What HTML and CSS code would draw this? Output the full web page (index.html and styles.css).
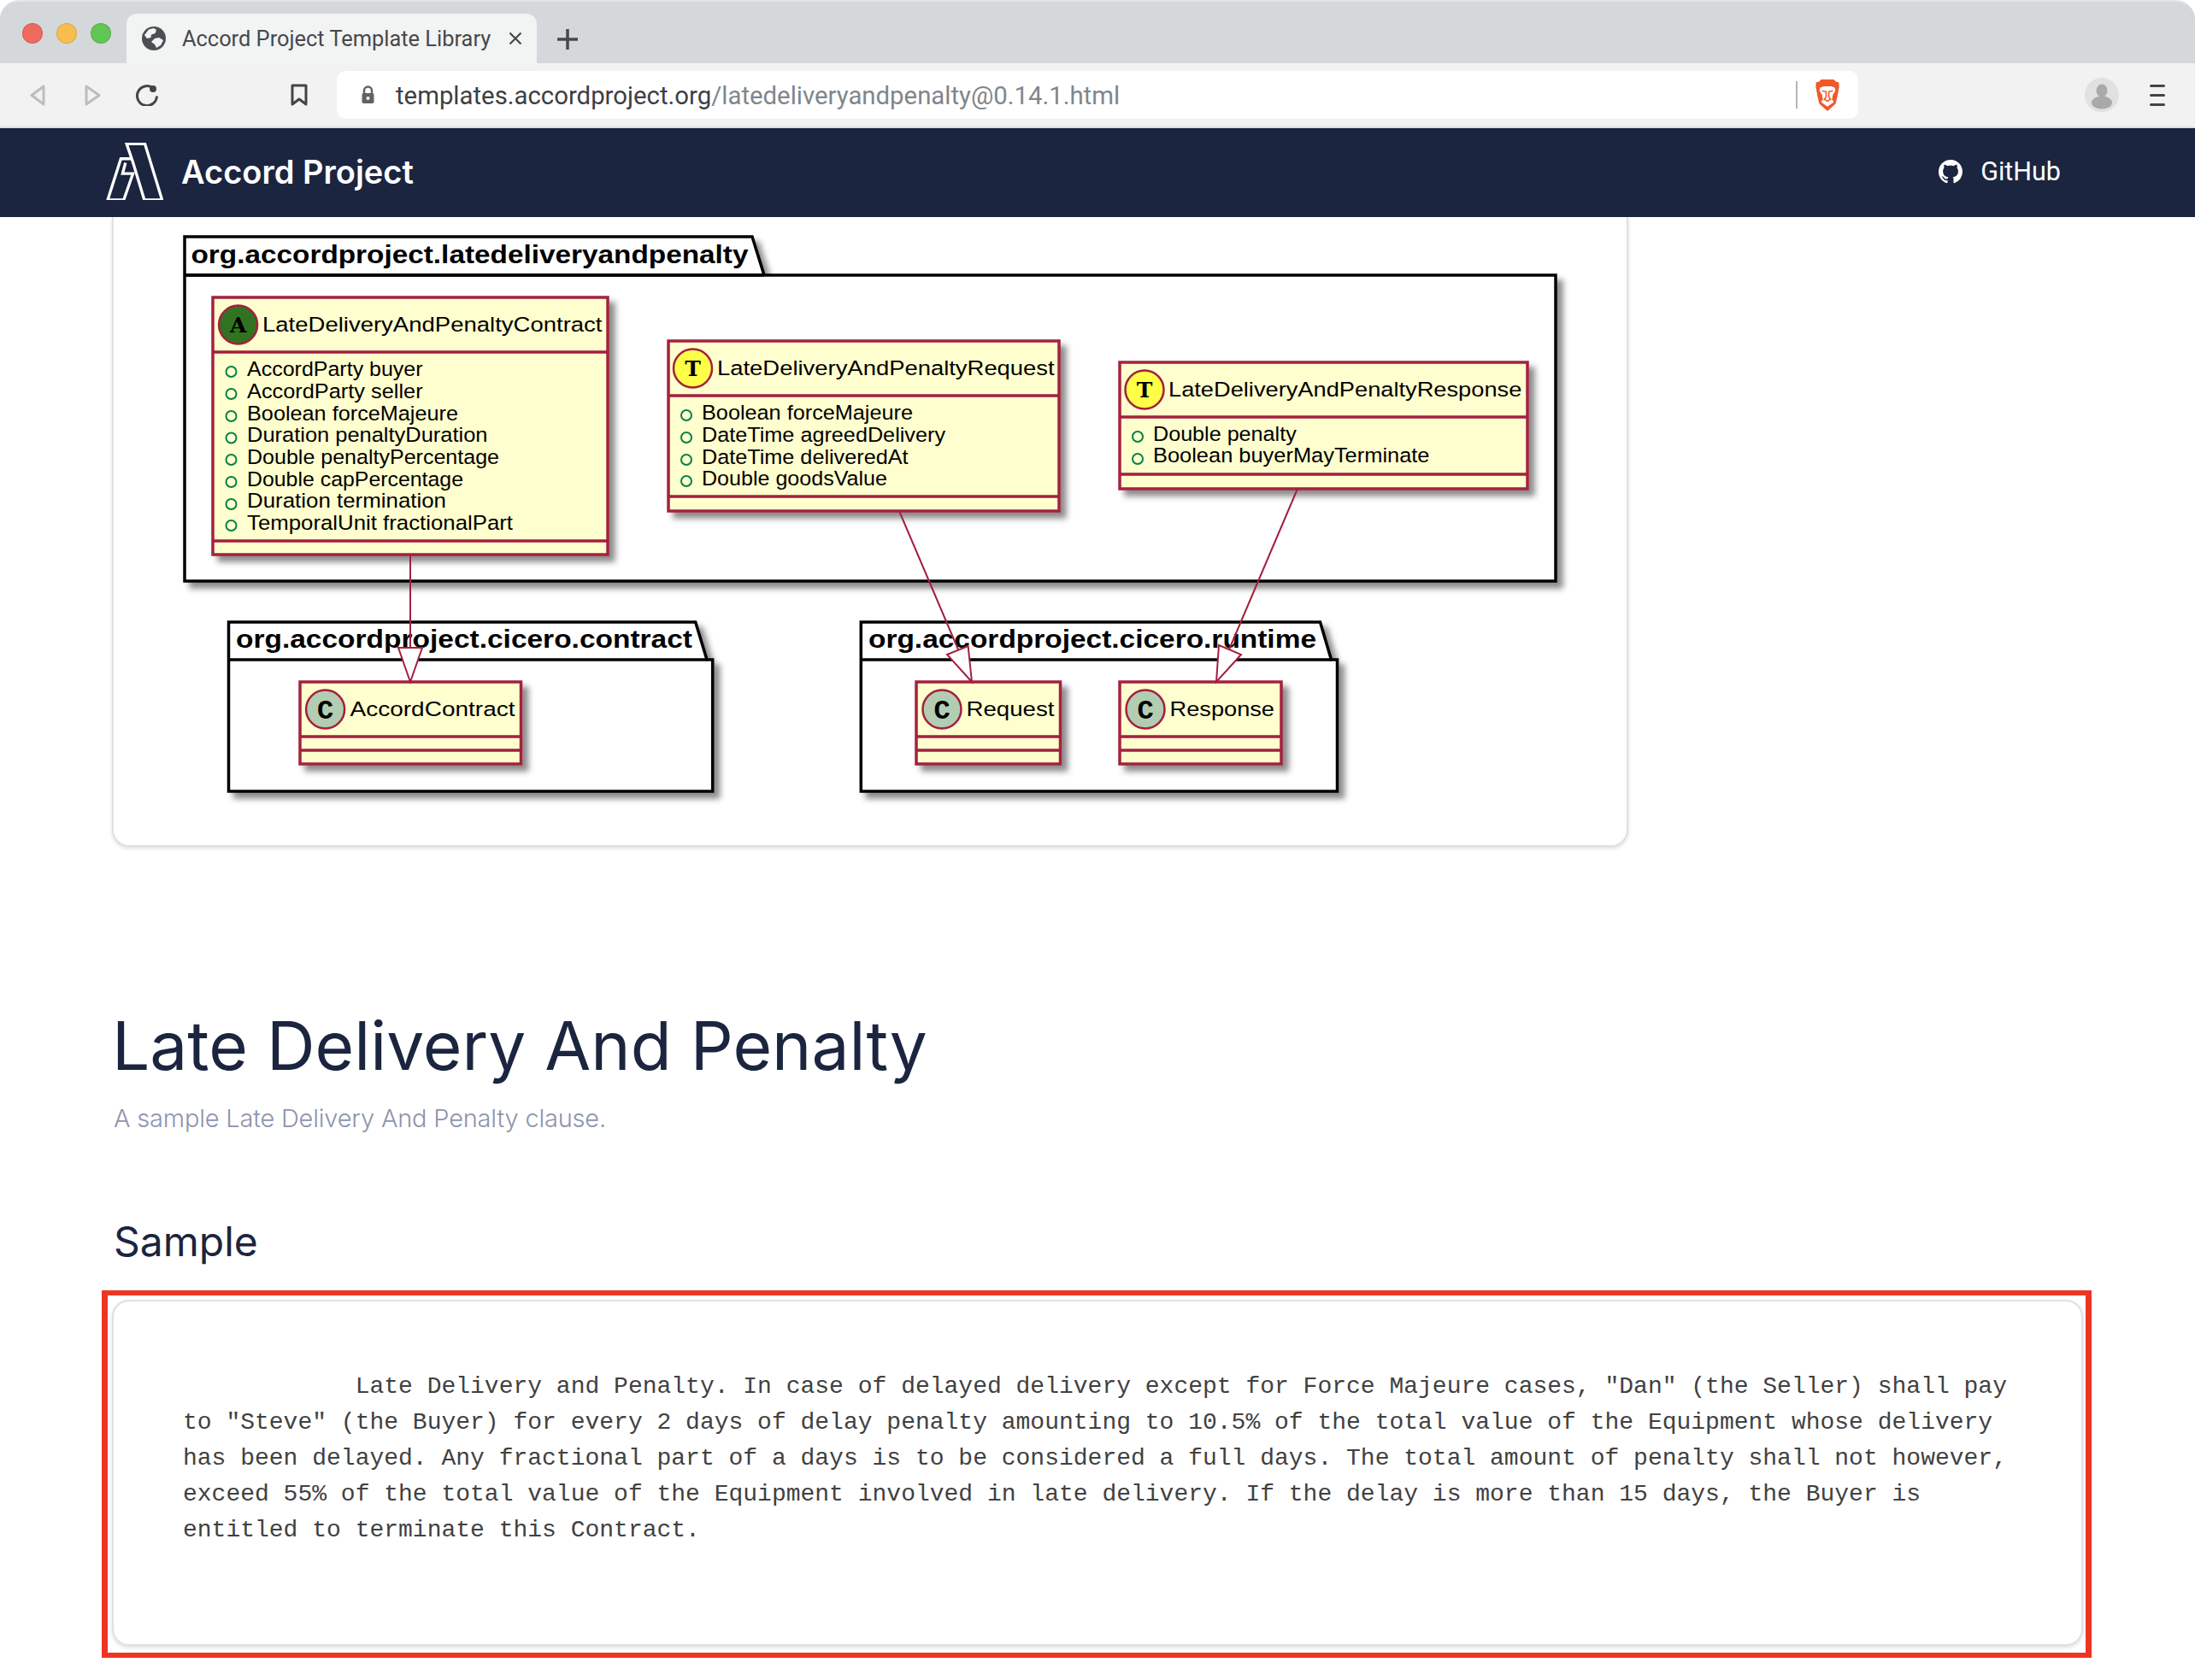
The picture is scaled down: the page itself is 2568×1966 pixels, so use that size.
FILE: index.html
```html
<!DOCTYPE html>
<html lang="en">
<head>
<meta charset="utf-8">
<title>Accord Project Template Library</title>
<link rel="stylesheet" href="styles.css">
</head>
<body>
<div class="window">
  <header class="chrome">
    <div class="tabstrip">
      <div class="lights"><span class="light red"></span><span class="light yellow"></span><span class="light green"></span></div>
      <div class="tab">
        <svg class="globe" viewBox="0 0 28 28"><circle cx="14" cy="14" r="14" fill="#4b5055"/><path d="M8 3.5 L14 2 L17 4 L15.5 8 L11 9.5 L10.5 13 L6 14 L3 10 Z" fill="#f2f3f3"/><path d="M15 14 L20 13 L25 16 L22 22 L17 25 L15 21 L11 18 Z" fill="#f2f3f3"/></svg>
        <span class="tab-title">Accord Project Template Library</span>
        <svg class="tab-x" viewBox="0 0 16 16"><path d="M1.5 1.5 L14.5 14.5 M14.5 1.5 L1.5 14.5"/></svg>
      </div>
      <svg class="newtab" viewBox="0 0 24 24"><path d="M12 0 V24 M0 12 H24"/></svg>
    </div>
    <div class="toolbar">
      <svg class="nav-arrow" viewBox="0 0 18 25"><path d="M16 2 V23 L2 12.5 Z"/></svg>
      <svg class="nav-arrow forward" viewBox="0 0 19 25"><path d="M2 2 V23 L17 12.5 Z"/></svg>
      <svg class="reload" viewBox="0 0 26 26"><path d="M20 5 A11.5 11.5 0 1 0 24.5 14.5"/><circle cx="20" cy="6" r="4"/></svg>
      <svg class="bookmark" viewBox="0 0 20 26"><path d="M2 2 H18 V24 L10 18 L2 24 Z"/></svg>
      <div class="urlbar">
        <svg class="lock" viewBox="0 0 17 22"><path class="lock-shackle" d="M4 10 V6 A4.500 4.500 0 0 1 13 6 V10"/><rect class="lock-body" x="1.500" y="9" width="14" height="12" rx="2"/><circle class="lock-dot" cx="8.500" cy="15" r="2"/></svg>
        <span class="url"><span class="url-host">templates.accordproject.org</span>/latedeliveryandpenalty@0.14.1.html</span>
        <span class="url-sep"></span>
        <svg class="brave" viewBox="0 0 26 36"><path d="M6 1 H20 L22.500 3.500 L25.500 4 L26 9 L25 14 L24 20 L22 28 L13 36 L4 28 L2 20 L1 14 L0 9 L.5 4 L3.500 3.500 Z" fill="#f0592a"/><path d="M5 10 L9 8.500 H17 L21 10 L22 13 L19 18 L18 23 L20 26 L13 31 L6 26 L8 23 L7 18 L4 13 Z" fill="#fff"/><path d="M7 13.500 L11.500 14.500 L11.500 20 L9.500 23 L13 25 L16.500 23 L14.500 20 L14.500 14.500 L19 13.500" fill="none" stroke="#f0592a" stroke-width="1.500"/></svg>
      </div>
      <svg class="avatar" viewBox="0 0 40 40"><circle cx="20" cy="20" r="20" fill="#e1e1e1"/><ellipse cx="20" cy="15" rx="6.500" ry="7.500" fill="#a9a9a9"/><ellipse cx="20" cy="29" rx="12" ry="7.500" fill="#a9a9a9"/></svg>
      <div class="menu"><span></span><span></span><span></span></div>
    </div>
  </header>

  <nav class="topnav">
    <div class="brand">
      <svg class="logo" viewBox="40 40 200 200"><path d="M112 44 H176 L236 240 H174 L134 108 Z"/><path d="M128 96 H92 L46 240 H102 L134 148 H98 L108 110"/></svg>
      <span class="brand-name">Accord Project</span>
    </div>
    <a class="gh">
      <svg class="gh-icon" viewBox="0 0 16 16"><path d="M8 0C3.580 0 0 3.580 0 8c0 3.540 2.290 6.530 5.470 7.590.4.07.55-.17.55-.38 0-.19-.01-.82-.01-1.490-2.010.37-2.530-.49-2.690-.94-.09-.23-.48-.94-.82-1.130-.28-.15-.68-.52-.01-.53.63-.01 1.080.58 1.230.82.72 1.210 1.870.87 2.330.66.07-.52.28-.87.51-1.070-1.780-.2-3.640-.89-3.640-3.950 0-.87.31-1.590.82-2.150-.08-.2-.36-1.020.08-2.120 0 0 .67-.21 2.200.82.64-.18 1.320-.27 2-.27.68 0 1.360.09 2 .27 1.530-1.040 2.200-.82 2.200-.82.44 1.100.16 1.920.08 2.120.51.56.82 1.270.82 2.150 0 3.070-1.870 3.750-3.650 3.950.29.25.54.73.54 1.480 0 1.070-.01 1.930-.01 2.200 0 .21.15.46.55.38A8.013 8.013 0 0016 8c0-4.420-3.580-8-8-8z"/></svg>
      <span>GitHub</span>
    </a>
  </nav>

  <main class="content">
    <section class="card diagram-card">
      <svg class="uml" viewBox="133 254 1770 735">
        <defs>
          <filter id="shadow" x="-10%" y="-10%" width="125%" height="125%"><feDropShadow dx="7" dy="7" stdDeviation="3.500" flood-color="#000" flood-opacity=".45"/></filter>
        </defs>

        <g class="pkg">
          <path d="M216 322 V277 H880 L894 322 M216 322 H1820 V680 H216 Z"/>
          <path d="M267.500 772 V728 H813.700 L827 772 H833.700 V926 H267.500 Z"/>
          <path d="M1007.300 772 V728 H1544.500 L1557.500 772 H1564.500 V926 H1007.300 Z"/>
        </g>
        <path class="pkg-line" d="M267.500 772 H827 M1007.300 772 H1557.500 M216 322 H894"/>
        <text class="pkg-name" x="223.500" y="307.500" textLength="652" lengthAdjust="spacingAndGlyphs">org.accordproject.latedeliveryandpenalty</text>
        <text class="pkg-name" x="276" y="757.500" textLength="534" lengthAdjust="spacingAndGlyphs">org.accordproject.cicero.contract</text>
        <text class="pkg-name" x="1016" y="757.500" textLength="524" lengthAdjust="spacingAndGlyphs">org.accordproject.cicero.runtime</text>

        <rect class="box" x="249" y="348" width="462" height="301"/>
        <path class="sep" d="M249 412 H711 M249 633 H711"/>
        <circle class="spot spot-a" cx="278.600" cy="380" r="22.500"/>
        <text class="slab-letter" x="278.600" y="389">A</text>
        <text class="name" x="307" y="388" textLength="397.500" lengthAdjust="spacingAndGlyphs">LateDeliveryAndPenaltyContract</text>
        <g class="fld"><circle cx="270.500" cy="435" r="6"/><circle cx="270.500" cy="461" r="6"/><circle cx="270.500" cy="487" r="6"/><circle cx="270.500" cy="512.500" r="6"/><circle cx="270.500" cy="538" r="6"/><circle cx="270.500" cy="564" r="6"/><circle cx="270.500" cy="590" r="6"/><circle cx="270.500" cy="615" r="6"/></g>
        <text class="field" x="289" y="440" textLength="205.600" lengthAdjust="spacingAndGlyphs">AccordParty buyer</text>
        <text class="field" x="289" y="466" textLength="205.600" lengthAdjust="spacingAndGlyphs">AccordParty seller</text>
        <text class="field" x="289" y="492" textLength="247" lengthAdjust="spacingAndGlyphs">Boolean forceMajeure</text>
        <text class="field" x="289" y="517" textLength="281.500" lengthAdjust="spacingAndGlyphs">Duration penaltyDuration</text>
        <text class="field" x="289" y="543" textLength="295" lengthAdjust="spacingAndGlyphs">Double penaltyPercentage</text>
        <text class="field" x="289" y="568.500" textLength="253" lengthAdjust="spacingAndGlyphs">Double capPercentage</text>
        <text class="field" x="289" y="594" textLength="233" lengthAdjust="spacingAndGlyphs">Duration termination</text>
        <text class="field" x="289" y="620" textLength="311" lengthAdjust="spacingAndGlyphs">TemporalUnit fractionalPart</text>

        <rect class="box" x="782" y="399" width="457" height="199"/>
        <path class="sep" d="M782 463 H1239 M782 581 H1239"/>
        <circle class="spot spot-t" cx="810.500" cy="431" r="22.500"/>
        <text class="slab-letter" x="810.500" y="440">T</text>
        <text class="name" x="839" y="439" textLength="394.700" lengthAdjust="spacingAndGlyphs">LateDeliveryAndPenaltyRequest</text>
        <g class="fld"><circle cx="803" cy="486" r="6"/><circle cx="803" cy="512" r="6"/><circle cx="803" cy="538" r="6"/><circle cx="803" cy="563" r="6"/></g>
        <text class="field" x="821" y="491" textLength="247" lengthAdjust="spacingAndGlyphs">Boolean forceMajeure</text>
        <text class="field" x="821" y="517" textLength="285" lengthAdjust="spacingAndGlyphs">DateTime agreedDelivery</text>
        <text class="field" x="821" y="543" textLength="241.500" lengthAdjust="spacingAndGlyphs">DateTime deliveredAt</text>
        <text class="field" x="821" y="568" textLength="217" lengthAdjust="spacingAndGlyphs">Double goodsValue</text>

        <rect class="box" x="1310" y="424" width="477" height="148"/>
        <path class="sep" d="M1310 488 H1787 M1310 555 H1787"/>
        <circle class="spot spot-t" cx="1339" cy="456" r="22.500"/>
        <text class="slab-letter" x="1339" y="465">T</text>
        <text class="name" x="1367" y="464" textLength="413.300" lengthAdjust="spacingAndGlyphs">LateDeliveryAndPenaltyResponse</text>
        <g class="fld"><circle cx="1331" cy="511" r="6"/><circle cx="1331" cy="537" r="6"/></g>
        <text class="field" x="1349" y="516" textLength="167.700" lengthAdjust="spacingAndGlyphs">Double penalty</text>
        <text class="field" x="1349" y="541" textLength="323.500" lengthAdjust="spacingAndGlyphs">Boolean buyerMayTerminate</text>

        <rect class="box" x="351" y="798" width="258.500" height="96"/>
        <path class="sep" d="M351 862 H609.500 M351 878 H609.500"/>
        <circle class="spot spot-c" cx="380.600" cy="830" r="22.500"/>
        <text class="spot-letter" x="380.600" y="841">C</text>
        <text class="name" x="409.500" y="838" textLength="193" lengthAdjust="spacingAndGlyphs">AccordContract</text>

        <rect class="box" x="1072" y="798" width="168.500" height="96"/>
        <path class="sep" d="M1072 862 H1240.500 M1072 878 H1240.500"/>
        <circle class="spot spot-c" cx="1102" cy="830" r="22.500"/>
        <text class="spot-letter" x="1102" y="841">C</text>
        <text class="name" x="1130.500" y="838" textLength="103" lengthAdjust="spacingAndGlyphs">Request</text>

        <rect class="box" x="1310" y="798" width="189" height="96"/>
        <path class="sep" d="M1310 862 H1499 M1310 878 H1499"/>
        <circle class="spot spot-c" cx="1340" cy="830" r="22.500"/>
        <text class="spot-letter" x="1340" y="841">C</text>
        <text class="name" x="1368.500" y="838" textLength="122.500" lengthAdjust="spacingAndGlyphs">Response</text>

        <path class="rel" d="M480 649 V758"/>
        <path class="head" d="M480 798 L466 758 H494 Z"/>
        <path class="rel" d="M1052 598 L1121 760"/>
        <path class="head" d="M1137 798 L1108 766 L1132.600 756 Z"/>
        <path class="rel" d="M1518 572 L1438 760"/>
        <path class="head" d="M1423 798 L1426 755 L1452 766 Z"/>
      </svg>
    </section>

    <h1 class="title">Late Delivery And Penalty</h1>
    <p class="subtitle">A sample Late Delivery And Penalty clause.</p>
    <h2 class="section-title">Sample</h2>

    <div class="highlight">
      <div class="card sample-card">
<pre class="sample">            Late Delivery and Penalty. In case of delayed delivery except for Force Majeure cases, "Dan" (the Seller) shall pay
to "Steve" (the Buyer) for every 2 days of delay penalty amounting to 10.5% of the total value of the Equipment whose delivery
has been delayed. Any fractional part of a days is to be considered a full days. The total amount of penalty shall not however,
exceed 55% of the total value of the Equipment involved in late delivery. If the delay is more than 15 days, the Buyer is
entitled to terminate this Contract.</pre>
      </div>
    </div>
  </main>
</div>
</body>
</html>
```
FILE: styles.css
```css
* { box-sizing: border-box; }
html, body { margin: 0; padding: 0; background: #fff; }
body { width: 2568px; height: 1966px; overflow: hidden; font-family: "Inter", "Liberation Sans", sans-serif; }
.window { width: 2568px; height: 1966px; overflow: hidden; display: flex; flex-direction: column; }

/* browser chrome */
.chrome { flex: none; }
.tabstrip { height: 74px; background: #d5d8db; border-radius: 22px 22px 0 0; border-top: 2px solid #e3e5e8; display: flex; align-items: flex-end; padding-left: 26px; }
.lights { display: flex; gap: 16px; align-self: flex-start; margin-top: 25px; }
.light { width: 24px; height: 24px; border-radius: 50%; border: 1px solid rgba(0,0,0,.12); }
.red { background: #ee6a5f; }
.yellow { background: #f7be4f; }
.green { background: #62c655; }
.tab { width: 480px; height: 58px; margin-left: 18px; background: #f2f3f3; border-radius: 12px 12px 0 0; display: flex; align-items: center; padding: 0 17px 0 18px; }
.globe { width: 28px; height: 28px; margin-right: 19px; flex: none; }
.tab-title { font-family: "Roboto", "Liberation Sans", sans-serif; font-size: 25.400px; color: #45494d; white-space: nowrap; flex: 1; }
.tab-x { width: 16px; height: 16px; flex: none; }
.tab-x path { stroke: #45494d; stroke-width: 2.200; fill: none; }
.newtab { width: 24px; height: 24px; margin-left: 24px; align-self: flex-start; margin-top: 32px; }
.newtab path { stroke: #45494d; stroke-width: 3.500; fill: none; stroke-linecap: round; }

.toolbar { height: 76px; background: #f2f2f2; border-bottom: 2px solid #dedede; display: flex; align-items: center; padding: 0 35px; }
.nav-arrow { width: 18px; height: 25px; flex: none; }
.nav-arrow path { fill: none; stroke: #bdbdbd; stroke-width: 3; stroke-linejoin: round; }
.nav-arrow.forward { width: 19px; margin-left: 46px; }
.reload { width: 26px; height: 26px; margin-left: 41px; flex: none; }
.reload path { fill: none; stroke: #444; stroke-width: 3; }
.reload circle { fill: #444; }
.bookmark { width: 20px; height: 26px; margin-left: 155px; flex: none; }
.bookmark path { fill: none; stroke: #444; stroke-width: 3; stroke-linejoin: round; }
.urlbar { width: 1780px; height: 56px; margin-left: 34px; background: #fff; border-radius: 10px; display: flex; align-items: center; padding: 0 12px 0 28px; flex: none; }
.lock { width: 17px; height: 22px; flex: none; margin-right: 24px; }
.lock-shackle { fill: none; stroke: #5f6368; stroke-width: 2.500; }
.lock-body { fill: #5f6368; }
.lock-dot { fill: #fff; }
.url { font-family: "Roboto", "Liberation Sans", sans-serif; font-size: 29.350px; line-height: 36px; padding-top: 2px; color: #80868b; flex: 1; white-space: nowrap; }
.url-host { color: #3c4043; }
.url-sep { width: 2px; height: 32px; background: #b5b5b5; margin-right: 20px; flex: none; }
.brave { width: 30px; height: 38px; margin-right: 9px; flex: none; }
.avatar { width: 40px; height: 40px; margin-left: auto; margin-right: 36px; flex: none; }
.menu { display: flex; flex-direction: column; gap: 8px; width: 18px; flex: none; }
.menu span { height: 3px; border-radius: 2px; background: #444; }

/* site nav */
.topnav { flex: none; height: 104px; background: #1b2540; display: flex; align-items: center; justify-content: space-between; padding: 0 157px 3px 124px; color: #fff; }
.brand { display: flex; align-items: center; gap: 21px; }
.logo { width: 67px; height: 67px; }
.logo path { fill: none; stroke: #fff; stroke-width: 10; }
.brand-name { font-size: 38px; font-weight: 600; white-space: nowrap; }
.gh { display: flex; align-items: center; gap: 21px; font-family: "Roboto", "Liberation Sans", sans-serif; font-size: 30.500px; }
.gh-icon { width: 28px; height: 28px; fill: #fff; }

/* content */
.content { flex: 1; position: relative; }
.card { background: #fff; border: 2px solid #e1e1e2; border-radius: 20px; box-shadow: 0 2px 4px rgba(34,36,38,.15); }
.diagram-card { width: 1774px; height: 737px; margin-left: 131px; border-top: 0; border-radius: 0 0 20px 20px; }
.uml { display: block; width: 1770px; height: 735px; }

.pkg path { fill: #fff; stroke: #000; stroke-width: 3.500; filter: url(#shadow); }
.pkg-line { fill: none; stroke: #000; stroke-width: 3.500; }
.pkg-name { font-family: "Liberation Sans", sans-serif; font-weight: 700; font-size: 29px; fill: #000; }
.box { fill: #fefece; stroke: #a3203f; stroke-width: 3.500; filter: url(#shadow); }
.sep { fill: none; stroke: #a3203f; stroke-width: 3.500; }
.spot { stroke: #a3203f; stroke-width: 2.500; }
.spot-a { fill: #317321; }
.spot-t { fill: #ffff47; }
.spot-c { fill: #b2cdb2; }
.spot-letter { font-family: "Liberation Mono", monospace; font-weight: 700; font-size: 32px; fill: #000; text-anchor: middle; }
.slab-letter { font-family: "DejaVu Serif", serif; font-weight: 700; font-size: 25px; fill: #000; text-anchor: middle; }
.name, .field { font-family: "Liberation Sans", sans-serif; fill: #000; font-size: 24.500px; }
.fld circle { fill: none; stroke: #038048; stroke-width: 2; }
.rel { fill: none; stroke: #a3203f; stroke-width: 2; }
.head { fill: #fff; stroke: #a3203f; stroke-width: 2; }

.title { margin: 188px 0 0 131px; font-size: 78.400px; line-height: 90px; font-weight: 400; color: #1b2540; white-space: nowrap; }
.subtitle { margin: 20px 0 0 133px; font-size: 29px; line-height: 40px; font-weight: 300; letter-spacing: -.2px; color: #8e93ad; }
.section-title { margin: 94px 0 0 133px; font-size: 48px; line-height: 60px; font-weight: 400; color: #1b2540; }

.highlight { width: 2328px; height: 430px; margin: 27px 0 0 119px; border: 6px solid #ee3524; border-left-width: 7px; border-right-width: 7px; padding: 5px 3px 8px 5px; }
.sample-card { height: 100%; padding: 79px 0 0 81px; }
.sample { margin: 0; font-family: "Liberation Mono", monospace; font-size: 28px; line-height: 42px; color: #414141; }
```
